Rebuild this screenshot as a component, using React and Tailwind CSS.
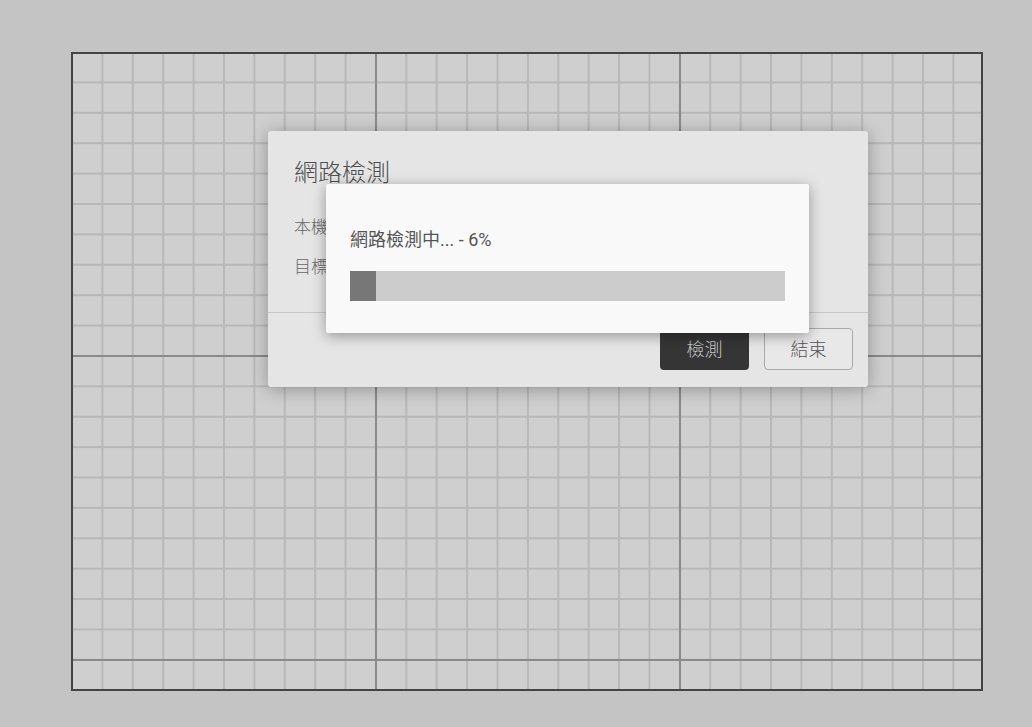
import React from 'react';

const FONT = { fontFamily: 'Roboto, "Noto Sans CJK TC", sans-serif' };

const GridCanvas = () => (
  <div
    className="w-[912px] h-[639px] border-2 border-[#444444] bg-[#cfcfcf] [background-image:linear-gradient(to_right,transparent_calc(100%-2px),#8a8a8a_calc(100%-2px)),linear-gradient(to_bottom,transparent_calc(100%-3px),#8a8a8a_calc(100%-3px),#8a8a8a_calc(100%-1px),transparent_calc(100%-1px)),linear-gradient(to_right,transparent_calc(100%-2px),#b8b8b8_calc(100%-2px)),linear-gradient(to_bottom,transparent_calc(100%-3px),#b8b8b8_calc(100%-3px),#b8b8b8_calc(100%-1px),transparent_calc(100%-1px))] [background-size:304px_304px,304px_304px,30.4px_30.4px,30.4px_30.4px]"
  />
);

const ProgressPopup = ({ percent }) => (
  <div className="absolute left-[326px] top-[184px] w-[483px] h-[149px] bg-[#f9f9f9] rounded-[2px] shadow-[0_3px_14px_rgba(0,0,0,0.35)] px-[24px] pt-[44px]">
    <div className="text-[18px] leading-[24px] text-[#555555]">網路檢測中... - {percent}%</div>
    <div className="mt-[19px] h-[30px] bg-[#cccccc]">
      <div className="h-full bg-[#777777]" style={{ width: `${percent}%` }} />
    </div>
  </div>
);

const NetworkDialog = () => (
  <div className="absolute left-[268px] top-[131px] w-[600px] h-[256px] bg-[#e5e5e5] rounded-[3px] shadow-[0_2px_18px_rgba(0,0,0,0.3)] flex flex-col">
    <div className="h-[182px] px-[26px] pt-[26px] border-b border-[#c8c8c8]">
      <h2 className="text-[24px] leading-[32px] font-light text-[#4f4f4f]">網路檢測</h2>
      <div className="mt-[26px] flex flex-col gap-[16px] text-[17px] leading-[24px] font-light text-[#666666]">
        <div>本機 IP</div>
        <div>目標 IP</div>
      </div>
    </div>
    <div className="flex-1 flex justify-end items-start gap-[15px] pt-[15px] pr-[15px]">
      <button className="w-[89px] h-[42px] rounded-[4px] bg-[#353535] text-[#c8c8c8] text-[18px] font-light">檢測</button>
      <button className="w-[89px] h-[42px] rounded-[4px] border border-[#aaaaaa] bg-[#e8e8e8] text-[#555555] text-[18px] font-light">結束</button>
    </div>
  </div>
);

export default function App() {
  return (
    <div className="relative w-full h-[727px] bg-[#c4c4c4] pt-[52px] pl-[71px]" style={FONT}>
      <GridCanvas />
      <NetworkDialog />
      <ProgressPopup percent={6} />
    </div>
  );
}
